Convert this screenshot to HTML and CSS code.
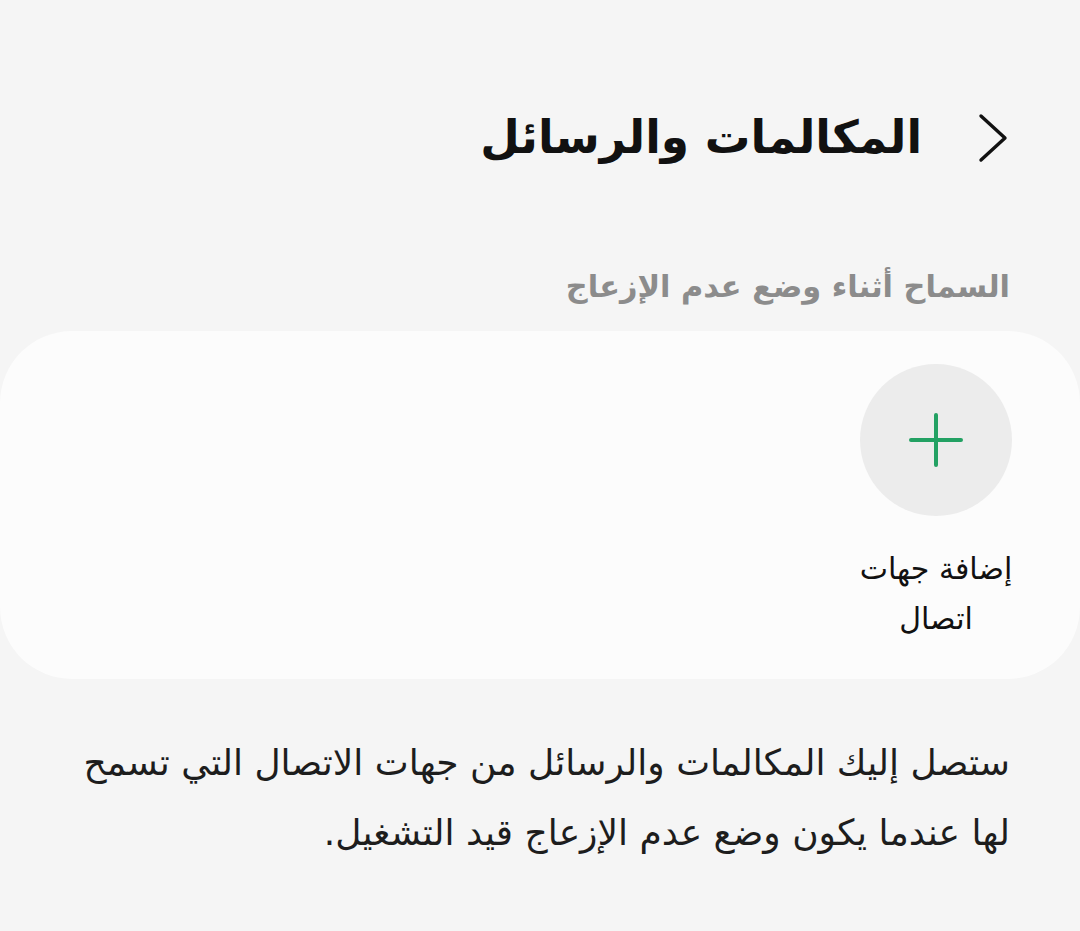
FILE: index.html
```html
<!DOCTYPE html>
<html lang="ar" dir="rtl">
<head>
<meta charset="utf-8">
<link rel="stylesheet" href="styles.css">
</head>
<body>
<div class="screen">
  <header class="topbar">
    <span class="back">
      <svg width="30" height="50" viewBox="0 0 30 50"><path d="M3 3 L27 25 L3 47" fill="none" stroke="#111" stroke-width="3.4" stroke-linecap="round" stroke-linejoin="round"/></svg>
    </span>
    <h1 class="title">المكالمات والرسائل</h1>
  </header>
  <div class="section-label">السماح أثناء وضع عدم الإزعاج</div>
  <div class="card">
    <div class="add-item">
      <div class="add-circle">
        <svg width="56" height="56" viewBox="0 0 56 56"><path d="M28 3 V53 M3 28 H53" stroke="#23a163" stroke-width="4" stroke-linecap="round"/></svg>
      </div>
      <div class="add-label">إضافة جهات اتصال</div>
    </div>
  </div>
  <p class="desc">ستصل إليك المكالمات والرسائل من جهات الاتصال التي تسمح لها عندما يكون وضع عدم الإزعاج قيد التشغيل.</p>
</div>
</body>
</html>
```

FILE: styles.css
```css
html, body {
  margin: 0;
  padding: 0;
  background: #f5f5f5;
}
body {
  font-family: "DejaVu Sans", "Noto Sans", sans-serif;
  color: #111;
}
.screen {
  width: 1080px;
  height: 931px;
  overflow: hidden;
}
.topbar {
  display: flex;
  align-items: center;
  gap: 56px;
  padding: 108px 72px 0 0;
  height: 60px;
}
.back {
  display: flex;
}
.title {
  margin: 0;
  font-size: 45.5px;
  font-weight: bold;
  line-height: 60px;
}
.section-label {
  margin-top: 94px;
  padding-right: 70px;
  font-size: 30.4px;
  font-weight: bold;
  color: #8c8c8c;
  line-height: 50px;
}
.card {
  margin-top: 19px;
  background: #fcfcfc;
  border-radius: 72px;
  height: 348px;
  display: flex;
  padding-right: 68px;
  box-sizing: border-box;
}
.add-item {
  width: 152px;
  display: flex;
  flex-direction: column;
  align-items: center;
  padding-top: 33px;
}
.add-circle {
  width: 152px;
  height: 152px;
  border-radius: 50%;
  background: #ececec;
  display: flex;
  align-items: center;
  justify-content: center;
}
.add-label {
  margin-top: 28px;
  width: 190px;
  text-align: center;
  font-size: 30px;
  line-height: 50px;
  color: #111;
}
.desc {
  margin: 49px 70px 0 60px;
  font-size: 36px;
  line-height: 70px;
  color: #1d1d1d;
}
```
